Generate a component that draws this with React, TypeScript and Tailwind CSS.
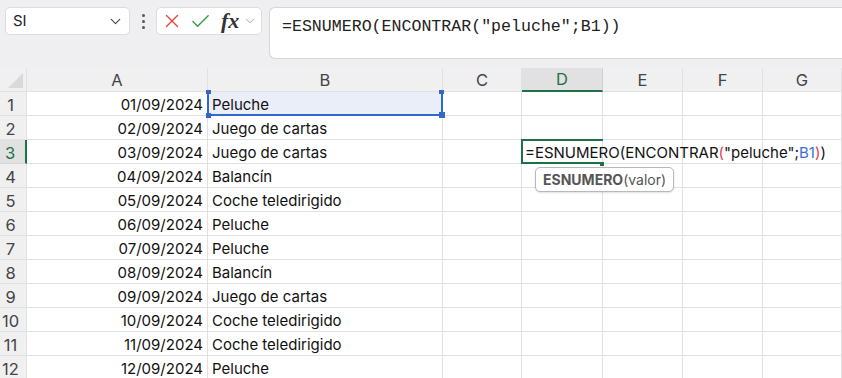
import React from "react";
import { ChevronDown, X, Check } from "lucide-react";

const rows: [string, string][] = [
  ["01/09/2024", "Peluche"],
  ["02/09/2024", "Juego de cartas"],
  ["03/09/2024", "Juego de cartas"],
  ["04/09/2024", "Balancín"],
  ["05/09/2024", "Coche teledirigido"],
  ["06/09/2024", "Peluche"],
  ["07/09/2024", "Peluche"],
  ["08/09/2024", "Balancín"],
  ["09/09/2024", "Juego de cartas"],
  ["10/09/2024", "Coche teledirigido"],
  ["11/09/2024", "Coche teledirigido"],
  ["12/09/2024", "Peluche"],
];

const cols = ["A", "B", "C", "D", "E", "F", "G"];

export default function App() {
  const cell = "border-r border-b border-[#e1e1e1] h-[24px]";
  return (
    <div
      className="w-[842px] h-[378px] overflow-hidden bg-white relative"
      style={{ fontFamily: "Inter, 'Noto Sans', sans-serif" }}
    >
      {/* toolbar */}
      <div className="h-[68px] bg-[#efeef1] flex items-start pt-[7px] pl-[5px]">
        <div className="w-[125px] h-[28px] bg-white rounded-[5px] border border-[#dcdcdc] flex items-center justify-between pl-[7px] pr-[5px]">
          <span className="text-[15px] text-[#222]">SI</span>
          <ChevronDown size={17} strokeWidth={1.6} className="text-[#444]" />
        </div>
        <div className="w-[26px] h-[28px] flex flex-col items-center justify-center gap-[3px]">
          <div className="w-[3px] h-[3px] bg-[#555] rounded-full" />
          <div className="w-[3px] h-[3px] bg-[#555] rounded-full" />
          <div className="w-[3px] h-[3px] bg-[#555] rounded-full" />
        </div>
        <div className="w-[106px] h-[28px] bg-white rounded-[5px] border border-[#dcdcdc] flex items-center pl-[4px]">
          <X size={22} strokeWidth={1.5} className="text-[#e5423a]" />
          <Check size={23} strokeWidth={1.5} className="text-[#3f9b4b] ml-[6px]" />
          <span
            className="ml-[9px] text-[22px] italic font-semibold text-[#333] leading-none"
            style={{ fontFamily: "'Liberation Serif', serif" }}
          >
            fx
          </span>
          <ChevronDown size={14} strokeWidth={1.6} className="text-[#999] ml-[4px]" />
        </div>
        <div className="ml-[7px] flex-1 h-[52px] bg-white rounded-l-[6px] border border-r-0 border-[#d6d6d6] pl-[12px] pt-[5px]">
          <span
            className="text-[16.6px] text-[#222]"
            style={{ fontFamily: "'Liberation Mono', monospace" }}
          >
            =ESNUMERO(ENCONTRAR("peluche";B1))
          </span>
        </div>
      </div>

      {/* grid */}
      <div
        className="grid relative"
        style={{ gridTemplateColumns: "27px 181px 235px 79px 81px 80px 80px 1fr" }}
      >
        {/* header row */}
        <div className={`${cell} bg-[#f0f0f0] relative`}>
          <div
            className="absolute left-[8px] top-[5px] w-[15px] h-[15px] bg-[#d9d9d9]"
            style={{ clipPath: "polygon(100% 0, 100% 100%, 0 100%)" }}
          />
        </div>
        {cols.map((c) =>
          c === "D" ? (
            <div
              key={c}
              className="h-[24px] bg-[#e1e1e1] border-r border-[#d0d0d0] border-b-2 border-b-[#1e7145] flex items-center justify-center pt-[1px] text-[16.5px] text-[#1e7145]"
            >
              {c}
            </div>
          ) : (
            <div
              key={c}
              className={`${cell} bg-[#f0f0f0] flex items-center justify-center pt-[1px] text-[16.5px] text-[#444]`}
            >
              {c}
            </div>
          )
        )}

        {rows.map(([d, t], i) => (
          <React.Fragment key={i}>
            {i === 2 ? (
              <div className="h-[24px] bg-[#e1e1e1] border-b border-[#d8d8d8] border-r-2 border-r-[#1e7145] flex items-center justify-center pr-[5px] pt-[3px] text-[16.5px] text-[#1e7145]">
                {i + 1}
              </div>
            ) : (
              <div
                className={`${cell} bg-[#f0f0f0] flex items-center justify-center pr-[5px] pt-[3px] text-[16.5px] text-[#444]`}
              >
                {i + 1}
              </div>
            )}
            <div className={`${cell} flex items-center justify-end pr-[4px] pt-[3px] text-[15px] text-[#111]`}>
              {d}
            </div>
            <div
              className={`${cell} flex items-center pl-[4px] pt-[3px] text-[15px] text-[#111] ${
                i === 0 ? "bg-[#e9eef8] relative" : ""
              }`}
            >
              {t}
              {i === 0 && (
                <>
                  <div className="absolute left-[-1px] top-0 bottom-[-1px] w-[2px] bg-[#3268c7]" />
                  <div className="absolute right-[-1px] top-0 bottom-[-1px] w-[2px] bg-[#3268c7]" />
                  <div className="absolute left-[-1px] right-[-1px] bottom-[-1px] h-[2px] bg-[#3268c7]" />
                  <div className="absolute left-[-2px] top-[-2px] w-[5px] h-[4px] bg-[#3268c7]" />
                  <div className="absolute right-[-2px] top-[-2px] w-[5px] h-[4px] bg-[#3268c7]" />
                  <div className="absolute left-[-2px] bottom-[-3px] w-[5px] h-[5px] bg-[#3268c7]" />
                  <div className="absolute right-[-3px] bottom-[-3px] w-[6px] h-[6px] bg-[#3268c7]" />
                </>
              )}
            </div>
            <div className={cell} />
            <div className={`${cell} ${i === 2 ? "relative" : ""}`}>
              {i === 2 && (
                <>
                  <div className="absolute left-[-1px] top-[-1px] right-[-1px] h-[2px] bg-[#1e7145]" />
                  <div className="absolute left-[-1px] top-[-1px] bottom-[-1px] w-[2px] bg-[#1e7145]" />
                  <div className="absolute left-[-1px] right-[2px] bottom-[-1px] h-[2px] bg-[#1e7145]" />
                  <div className="absolute right-[-2px] bottom-[-3px] w-[4px] h-[4px] bg-[#1e7145]" />
                  <div className="absolute left-[3px] top-[2px] h-[23px] flex items-center whitespace-nowrap text-[15px] text-[#111] z-10">
                    <span>=ESNUMERO(ENCONTRAR</span>
                    <span className="text-[#e0405a]">(</span>
                    <span>"peluche";</span>
                    <span className="text-[#3b6fd6]">B1</span>
                    <span className="text-[#e0405a]">)</span>
                    <span>)</span>
                  </div>
                  <div className="absolute left-[13px] top-[27px] h-[25px] px-[7px] flex items-center whitespace-nowrap bg-white border border-[#b8b8b8] rounded-[5px] text-[14px] text-[#555] z-10 shadow-[0_1px_2px_rgba(0,0,0,0.12)]">
                    <span className="font-bold">ESNUMERO</span>
                    <span>(valor)</span>
                  </div>
                </>
              )}
            </div>
            <div className={cell} />
            <div className={cell} />
            <div className={cell} />
          </React.Fragment>
        ))}
      </div>
    </div>
  );
}
